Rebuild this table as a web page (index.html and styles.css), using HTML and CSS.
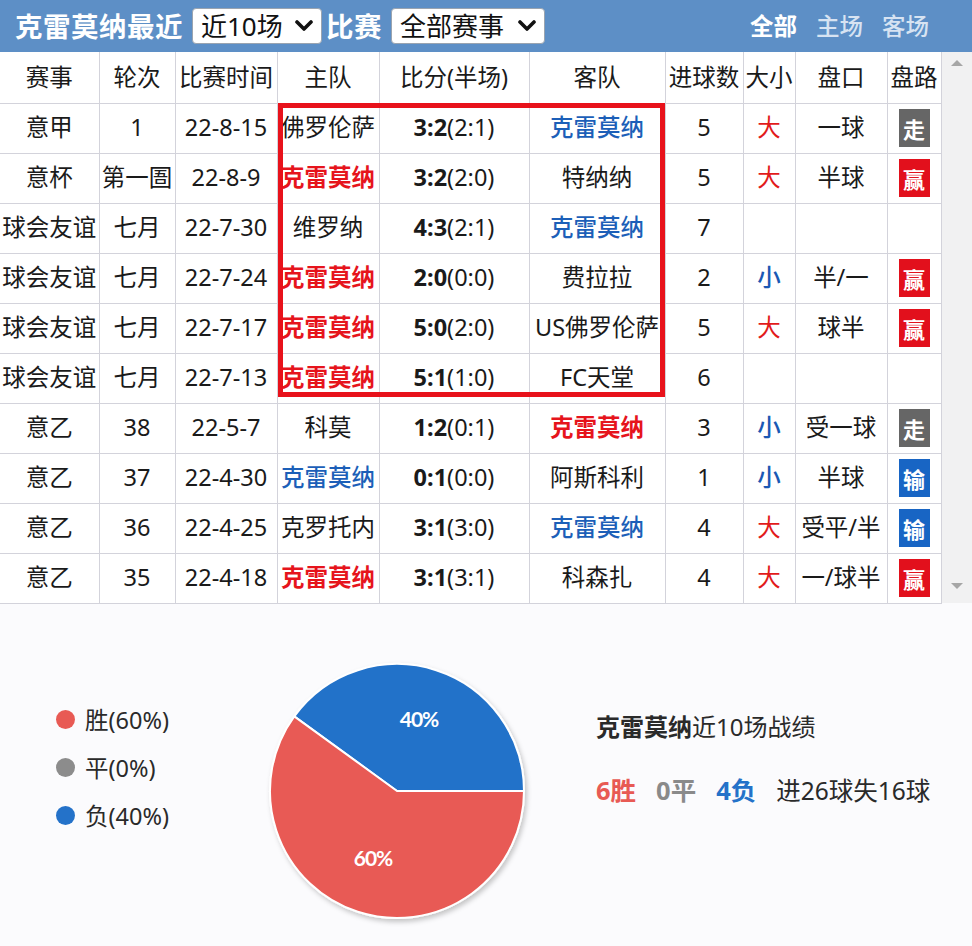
FILE: index.html
```html
<!DOCTYPE html>
<html lang="zh-CN">
<head>
<meta charset="utf-8">
<title>克雷莫纳最近</title>
<link rel="stylesheet" href="styles.css">
</head>
<body>
<div class="page">
  <div class="topbar">
    <span class="title">克雷莫纳最近</span>
    <div class="sel sel-count"><span>近10场</span><svg class="chev" width="18" height="12" viewBox="0 0 18 12"><polyline points="2,2 9,9 16,2" fill="none" stroke="#111" stroke-width="3.6" stroke-linecap="round" stroke-linejoin="round"/></svg></div>
    <span class="title small-gap">比赛</span>
    <div class="sel sel-type"><span>全部赛事</span><svg class="chev" width="18" height="12" viewBox="0 0 18 12"><polyline points="2,2 9,9 16,2" fill="none" stroke="#111" stroke-width="3.6" stroke-linecap="round" stroke-linejoin="round"/></svg></div>
    <div class="tabs">
      <span class="tab active">全部</span>
      <span class="tab">主场</span>
      <span class="tab">客场</span>
    </div>
  </div>

  <div class="tablearea">
    <div class="tablebox">
      <table class="matches">
        <colgroup>
          <col class="w1"><col class="w2"><col class="w3"><col class="w4"><col class="w5">
          <col class="w6"><col class="w7"><col class="w8"><col class="w9"><col class="w10">
        </colgroup>
        <thead>
          <tr><th>赛事</th><th>轮次</th><th>比赛时间</th><th>主队</th><th>比分(半场)</th><th>客队</th><th>进球数</th><th>大小</th><th>盘口</th><th>盘路</th></tr>
        </thead>
        <tbody>
          <tr><td>意甲</td><td>1</td><td>22-8-15</td><td>佛罗伦萨</td><td><b>3:2</b>(2:1)</td><td class="blue">克雷莫纳</td><td>5</td><td class="big">大</td><td>一球</td><td><span class="badge draw">走</span></td></tr>
          <tr><td>意杯</td><td>第一圄</td><td>22-8-9</td><td class="red">克雷莫纳</td><td><b>3:2</b>(2:0)</td><td>特纳纳</td><td>5</td><td class="big">大</td><td>半球</td><td><span class="badge win">赢</span></td></tr>
          <tr><td>球会友谊</td><td>七月</td><td>22-7-30</td><td>维罗纳</td><td><b>4:3</b>(2:1)</td><td class="blue">克雷莫纳</td><td>7</td><td></td><td></td><td></td></tr>
          <tr><td>球会友谊</td><td>七月</td><td>22-7-24</td><td class="red">克雷莫纳</td><td><b>2:0</b>(0:0)</td><td>费拉拉</td><td>2</td><td class="small">小</td><td>半/一</td><td><span class="badge win">赢</span></td></tr>
          <tr><td>球会友谊</td><td>七月</td><td>22-7-17</td><td class="red">克雷莫纳</td><td><b>5:0</b>(2:0)</td><td>US佛罗伦萨</td><td>5</td><td class="big">大</td><td>球半</td><td><span class="badge win">赢</span></td></tr>
          <tr><td>球会友谊</td><td>七月</td><td>22-7-13</td><td class="red">克雷莫纳</td><td><b>5:1</b>(1:0)</td><td>FC天堂</td><td>6</td><td></td><td></td><td></td></tr>
          <tr><td>意乙</td><td>38</td><td>22-5-7</td><td>科莫</td><td><b>1:2</b>(0:1)</td><td class="red">克雷莫纳</td><td>3</td><td class="small">小</td><td>受一球</td><td><span class="badge draw">走</span></td></tr>
          <tr><td>意乙</td><td>37</td><td>22-4-30</td><td class="blue">克雷莫纳</td><td><b>0:1</b>(0:0)</td><td>阿斯科利</td><td>1</td><td class="small">小</td><td>半球</td><td><span class="badge lose">输</span></td></tr>
          <tr><td>意乙</td><td>36</td><td>22-4-25</td><td>克罗托内</td><td><b>3:1</b>(3:0)</td><td class="blue">克雷莫纳</td><td>4</td><td class="big">大</td><td>受平/半</td><td><span class="badge lose">输</span></td></tr>
          <tr><td>意乙</td><td>35</td><td>22-4-18</td><td class="red">克雷莫纳</td><td><b>3:1</b>(3:1)</td><td>科森扎</td><td>4</td><td class="big">大</td><td>一/球半</td><td><span class="badge win">赢</span></td></tr>
        </tbody>
      </table>
      <div class="highlight"></div>
    </div>
    <div class="scrollbar">
      <span class="arrow up"></span>
      <span class="arrow down"></span>
    </div>
  </div>

  <div class="stats">
    <div class="legend">
      <div class="item"><span class="dot c-win"></span>胜(60%)</div>
      <div class="item"><span class="dot c-draw"></span>平(0%)</div>
      <div class="item"><span class="dot c-lose"></span>负(40%)</div>
    </div>
    <svg class="pie" width="268" height="268" viewBox="0 0 268 268">
      <defs>
        <filter id="sh" x="-10%" y="-10%" width="125%" height="125%">
          <feDropShadow dx="2" dy="3" stdDeviation="2.5" flood-color="#000" flood-opacity="0.22"/>
        </filter>
      </defs>
      <g filter="url(#sh)">
        <path d="M127,127 L254,127 A127,127 0 0 0 24.25,52.35 Z" fill="#2472c9" stroke="#fff" stroke-width="2" stroke-linejoin="round"/>
        <path d="M127,127 L24.25,52.35 A127,127 0 1 0 254,127 Z" fill="#e85a54" stroke="#fff" stroke-width="2" stroke-linejoin="round"/>
      </g>
      <text x="149" y="58" class="pct">40%</text>
      <text x="103" y="197" class="pct">60%</text>
    </svg>
    <div class="summary">
      <div class="line1"><b>克雷莫纳</b>近10场战绩</div>
      <div class="line2"><b class="t-win">6胜</b><b class="t-draw">0平</b><b class="t-lose">4负</b><span>进26球失16球</span></div>
    </div>
  </div>
</div>
</body>
</html>
```

FILE: styles.css
```css
* { box-sizing: border-box; }
html, body { margin: 0; padding: 0; background: #fff; }
body {
  font-family: "Noto Sans", "Noto Sans CJK SC", sans-serif;
  color: #1c1c1c;
}
.page { width: 972px; height: 946px; overflow: hidden; background: #fbfbfd; }

/* top bar */
.topbar {
  height: 52px;
  background: #5d8fc6;
  display: flex;
  align-items: center;
  padding-left: 15px;
  padding-right: 43px;
}
.title {
  font-family: "Noto Sans CJK SC", sans-serif;
  font-weight: 700;
  font-size: 27.5px;
  color: #fff;
  line-height: 1;
  letter-spacing: 0.5px;
}
.small-gap { margin-left: 4px; }
.sel {
  height: 36px;
  background: #fff;
  border: 1px solid #9aa4b0;
  border-radius: 4px;
  display: flex;
  align-items: center;
  justify-content: space-between;
  padding: 0 8px 0 8px;
  font-family: "Noto Sans", "Noto Sans CJK SC", sans-serif;
  font-size: 26px;
  color: #111;
  line-height: 1;
}
.sel-count { width: 130px; margin-left: 9px; }
.sel-type { width: 154px; margin-left: 9px; }
.chev { flex: none; }
.tabs {
  margin-left: auto;
  display: flex;
  gap: 19px;
}
.tab {
  font-family: "Noto Sans CJK SC", sans-serif;
  font-size: 23.5px;
  color: #d7e3f2;
  font-weight: 500;
  line-height: 1;
}
.tab.active { color: #fff; font-weight: 700; }

/* table */
.tablearea {
  display: flex;
  height: 551px;
  background: #fff;
}
.tablebox { position: relative; width: 941px; flex: none; }
.matches {
  width: 941px;
  table-layout: fixed;
  border-collapse: collapse;
  font-size: 23.5px;
  line-height: 1;
}
.w1 { width: 99px; } .w2 { width: 76px; } .w3 { width: 102px; } .w4 { width: 102px; }
.w5 { width: 150px; } .w6 { width: 136px; } .w7 { width: 78px; } .w8 { width: 52px; }
.w9 { width: 92px; } .w10 { width: 54px; }
.matches th, .matches td {
  border: 1px solid #d3d3db;
  padding: 0;
  text-align: center;
  white-space: nowrap;
  overflow: visible;
  font-weight: 400;
  color: #1a1a1a;
}
.matches th:first-child, .matches td:first-child { border-left: none; }
.matches thead tr { height: 51px; }
.matches thead th { border-top: none; }
.matches tbody tr { height: 50px; }
.matches td b { font-weight: 700; }
.matches td.red { color: #e6141c; font-weight: 700; }
.matches td.blue { color: #1c5fb8; font-weight: 500; }
.matches td.big { color: #e21a1a; }
.matches td.small { color: #1a58b4; font-weight: 500; }
.badge {
  display: inline-flex;
  width: 31px;
  height: 38px;
  align-items: center;
  justify-content: center;
  font-family: "Noto Sans CJK SC", sans-serif;
  font-weight: 700;
  font-size: 22px;
  color: #fff;
  vertical-align: middle;
}
.badge.draw { background: #666666; }
.badge.win { background: #e2101c; }
.badge.lose { background: #1865c4; }

.highlight {
  position: absolute;
  left: 278px;
  top: 51px;
  width: 387px;
  height: 294px;
  border: 5px solid #e8121b;
  pointer-events: none;
}

.scrollbar {
  flex: 1;
  background: #f1f1f2;
  display: flex;
  flex-direction: column;
  justify-content: space-between;
  align-items: center;
  padding: 8px 0 14px;
}
.arrow {
  width: 0; height: 0;
  border-left: 6px solid transparent;
  border-right: 6px solid transparent;
}
.arrow.up { border-bottom: 6px solid #a6a6a6; }
.arrow.down { border-top: 6px solid #a6a6a6; }

/* stats */
.stats {
  display: flex;
  align-items: flex-start;
  height: 343px;
  padding-left: 56px;
  background: #fbfbfd;
}
.legend {
  width: 214px;
  margin-top: 92px;
  display: flex;
  flex-direction: column;
}
.item {
  height: 48px;
  display: flex;
  align-items: center;
  gap: 10px;
  font-family: "Noto Sans", "Noto Sans CJK SC", sans-serif;
  font-size: 23.5px;
  color: #2a2a2a;
}
.dot { width: 19px; height: 19px; border-radius: 50%; flex: none; }
.c-win { background: #e85a54; }
.c-draw { background: #8c8c8c; }
.c-lose { background: #2472c9; }

.pie { margin-top: 61px; flex: none; overflow: visible; }
.pct {
  font-family: Lato, "Noto Sans", sans-serif;
  font-weight: 700;
  font-size: 21px;
  fill: #fff;
  text-anchor: middle;
  dominant-baseline: middle;
  letter-spacing: -1px;
}

.summary {
  margin-left: 58px;
  margin-top: 108px;
  font-family: "Noto Sans", "Noto Sans CJK SC", sans-serif;
  color: #2a2a2a;
}
.line1 {
  font-size: 24px;
  line-height: 32px;
}
.line1 b { font-weight: 700; }
.line2 {
  margin-top: 31px;
  line-height: 32px;
  font-size: 24.5px;
  display: flex;
  align-items: baseline;
  gap: 20px;
}
.line2 b { font-size: 25.5px; font-weight: 700; }
.t-win { color: #e85a54; }
.t-draw { color: #8a8a8a; }
.t-lose { color: #2472c9; }
```
